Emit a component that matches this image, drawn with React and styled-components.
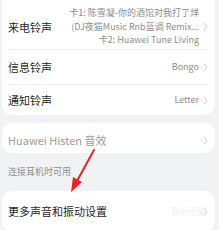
import React from "react";
import styled, { createGlobalStyle } from "styled-components";

const Global = createGlobalStyle`
  html, body { margin: 0; padding: 0; background: #f1f2f4; }
  body { font-family: "Noto Sans CJK SC", "Noto Sans", sans-serif; width: 219px; height: 230px; overflow: hidden; }
`;

const Page = styled.div`
  position: relative;
  display: flex;
  flex-direction: column;
  padding: 0 4px 0 2px;
  margin-top: -12px;
  height: 242px;
  overflow: hidden;
`;

const Card = styled.div`
  background: #ffffff;
  border-radius: 10px;
  padding: 0 7px 0 6px;
  margin-top: ${(p) => p.$mt || 0}px;
  display: flex;
  flex-direction: column;
`;

const Row = styled.div`
  display: flex;
  align-items: center;
  justify-content: space-between;
  height: ${(p) => p.$h}px;
  border-bottom: ${(p) => (p.$line ? "1px solid #eeeeee" : "none")};
  box-sizing: border-box;
  padding-top: ${(p) => p.$pt || 0}px;
`;

const Label = styled.div`
  font-size: 11px;
  color: ${(p) => (p.$muted ? "#9a9a9a" : "#1f1f1f")};
  white-space: nowrap;
`;

const Right = styled.div`
  display: flex;
  align-items: center;
  gap: 4px;
`;

const Values = styled.div`
  display: flex;
  flex-direction: column;
  align-items: flex-end;
  font-size: 9px;
  line-height: 13.5px;
  color: #8c8c8c;
  white-space: nowrap;
`;

const Chevron = styled.svg`
  width: 5px;
  height: 9px;
  flex: none;
`;

const Hint = styled.div`
  font-size: 9px;
  color: #8e8e8e;
  padding: 13px 0 0 6px;
  height: 26px;
  box-sizing: border-box;
  line-height: 12px;
`;

const Arrow = styled.svg`
  position: absolute;
  left: 66px;
  top: 160px;
  width: 34px;
  height: 46px;
`;

const Watermark = styled.div`
  position: absolute;
  right: 14px;
  top: 217px;
  font-size: 10px;
  color: #efefef;
  font-family: "Liberation Sans", sans-serif;
  letter-spacing: -0.3px;
`;

const Chev = () => (
  <Chevron viewBox="0 0 5 9">
    <path d="M1 1 L4 4.5 L1 8" fill="none" stroke="#c9c9c9" strokeWidth="1" strokeLinecap="round" strokeLinejoin="round" />
  </Chevron>
);

export default function App() {
  return (
    <>
      <Global />
      <Page>
        <Card>
          <Row $h={62} $line $pt={16}>
            <Label>来电铃声</Label>
            <Right>
              <Values>
                <span>卡1: 陈雪凝-你的酒馆对我打了烊</span>
                <span>(DJ夜猫Music Rnb蓝调 Remix...</span>
                <span>卡2: Huawei Tune Living</span>
              </Values>
              <Chev />
            </Right>
          </Row>
          <Row $h={35} $line>
            <Label>信息铃声</Label>
            <Right>
              <Values>Bongo</Values>
              <Chev />
            </Right>
          </Row>
          <Row $h={30}>
            <Label>通知铃声</Label>
            <Right>
              <Values>Letter</Values>
              <Chev />
            </Right>
          </Row>
        </Card>
        <Card $mt={8}>
          <Row $h={30} $pt={4}>
            <Label $muted>Huawei Histen 音效</Label>
            <Chev />
          </Row>
        </Card>
        <Hint>连接耳机时可用</Hint>
        <Card $mt={13}>
          <Row $h={40}>
            <Label>更多声音和振动设置</Label>
            <Chev />
          </Row>
        </Card>
        <Watermark>Bai经验</Watermark>
        <Arrow viewBox="0 0 34 46">
          <line x1="28" y1="2" x2="11" y2="33" stroke="#e3262a" strokeWidth="2" strokeLinecap="round" />
          <polygon points="5,44 7,29 16,34" fill="#e3262a" />
        </Arrow>
      </Page>
    </>
  );
}
